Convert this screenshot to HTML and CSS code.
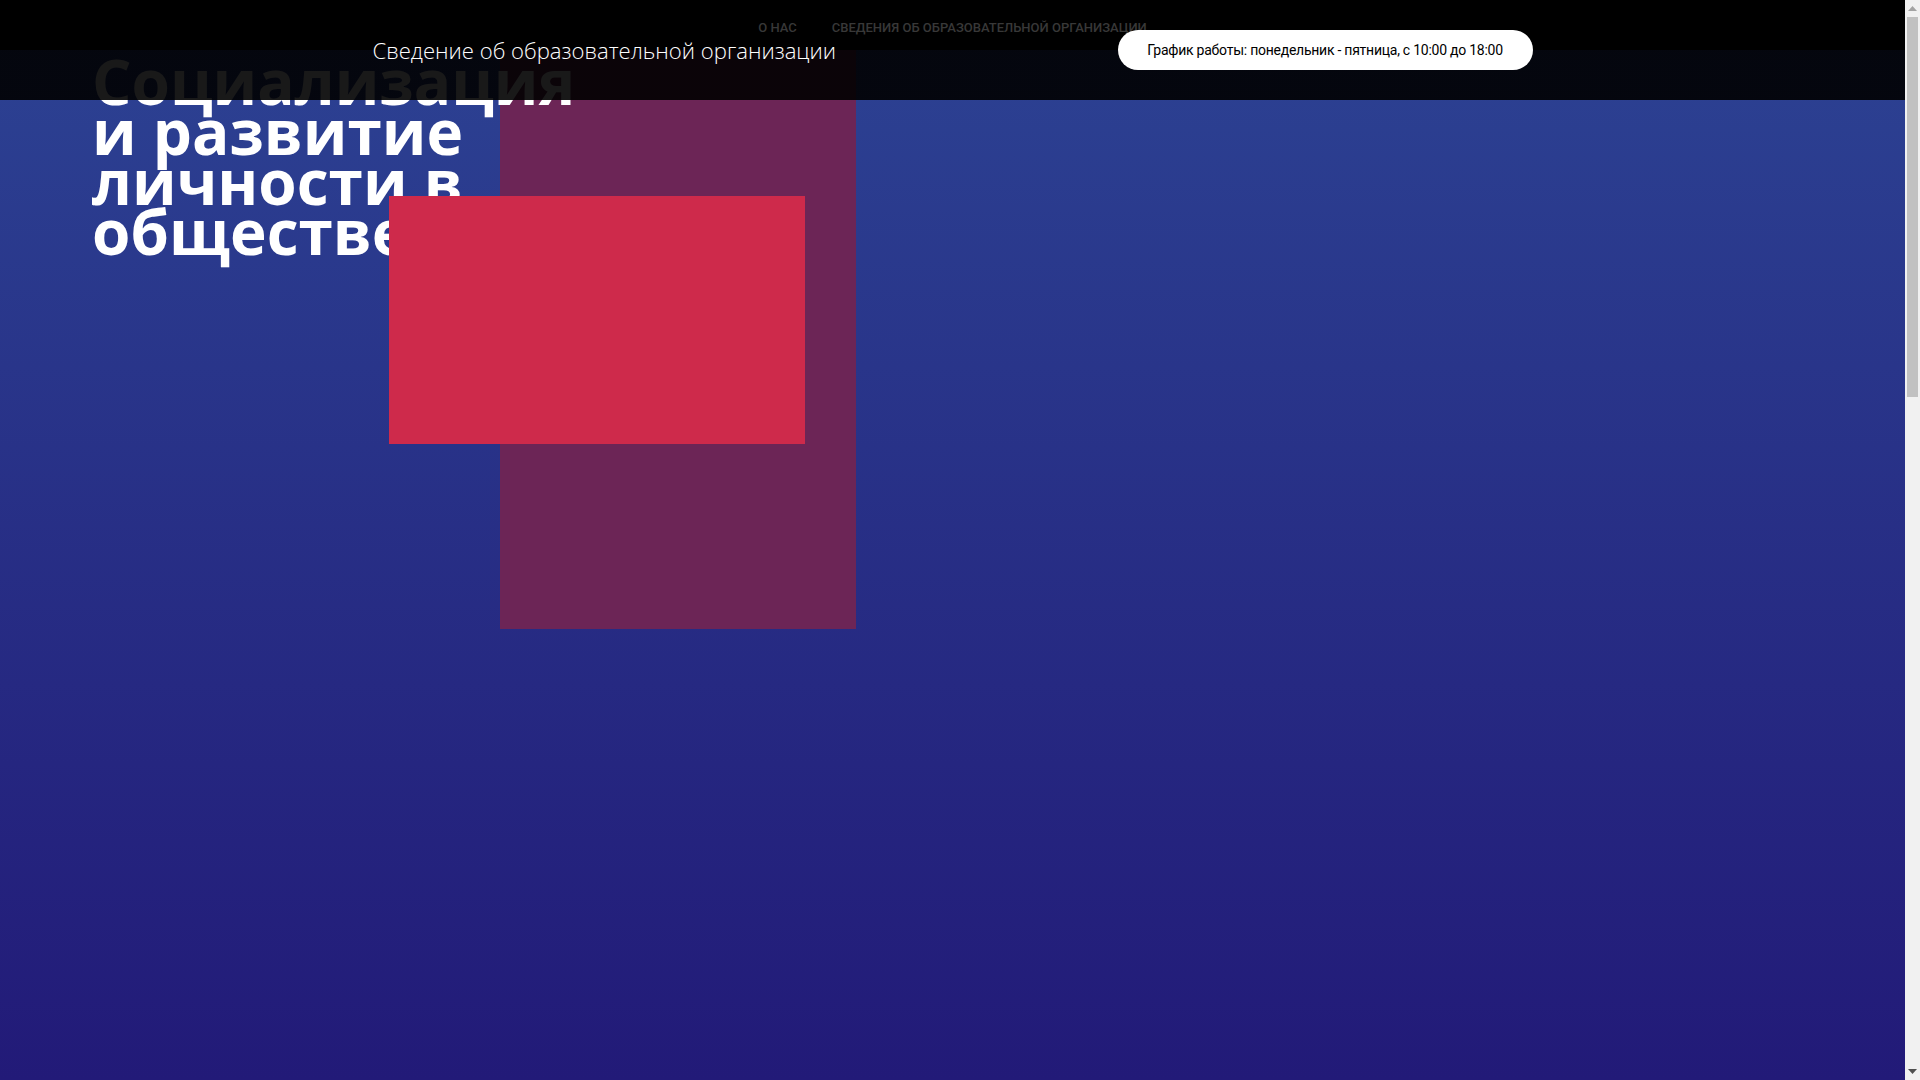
FILE: index.html
```html
<!DOCTYPE html>
<html lang="ru">
<head>
<meta charset="utf-8">
<title>Социализация и развитие личности в обществе</title>
<link rel="stylesheet" href="styles.css">
</head>
<body>
<div class="page">
  <header class="site-header">
    <nav class="main-nav">
      <a class="nav-link" href="#">О НАС</a>
      <a class="nav-link" href="#">СВЕДЕНИЯ ОБ ОБРАЗОВАТЕЛЬНОЙ ОРГАНИЗАЦИИ</a>
    </nav>
    <div class="header-row">
      <a class="brand" href="#">Сведение об образовательной организации</a>
      <div class="schedule">График работы: понедельник - пятница, с 10:00 до 18:00</div>
    </div>
  </header>
  <main>
    <section class="hero">
      <div class="shape shape-purple"></div>
      <h1 class="hero-title">Социализация<br>и развитие<br>личности в<br>обществе</h1>
      <div class="shape shape-red"></div>
    </section>
  </main>
</div>
<div class="scroll-rail" aria-hidden="true">
  <div class="rail-btn">
    <svg width="9" height="5" viewBox="0 0 9 5"><path d="M0 5 L4.5 0 L9 5 Z" fill="#a3a3a3"/></svg>
  </div>
  <div class="rail-track">
    <div class="rail-thumb"></div>
  </div>
  <div class="rail-btn">
    <svg width="9" height="5" viewBox="0 0 9 5"><path d="M0 0 L9 0 L4.5 5 Z" fill="#505050"/></svg>
  </div>
</div>
</body>
</html>
```

FILE: styles.css
```css
html, body {
  margin: 0;
  padding: 0;
  height: 100%;
  overflow: hidden;
}
body {
  background: #000;
  font-family: "Open Sans", "Noto Sans", sans-serif;
  display: flex;
}
.page {
  position: relative;
  flex: 1;
  min-width: 0;
  height: 100vh;
  overflow: hidden;
}
.scroll-rail {
  width: 15px;
  height: 100vh;
  background: #f1f1f1;
  display: flex;
  flex-direction: column;
}
.rail-btn {
  height: 17px;
  display: flex;
  align-items: center;
  justify-content: center;
}
.rail-track {
  flex: 1;
  padding: 0 2px;
}
.rail-thumb {
  height: 380px;
  background: #c1c1c1;
}
.site-header {
  position: absolute;
  top: 0;
  left: 0;
  right: 0;
  height: 100px;
  z-index: 10;
  display: grid;
  background: linear-gradient(to bottom, #000 0, #000 50px, rgba(0,0,0,0.9) 50px, rgba(0,0,0,0.9) 100px);
}
.main-nav {
  grid-area: 1 / 1;
  justify-self: center;
  align-self: start;
  padding-top: 20px;
  display: flex;
  gap: 35px;
}
.nav-link {
  font-family: Roboto, "Noto Sans", sans-serif;
  font-weight: 500;
  font-size: 13px;
  line-height: 16px;
  color: #383838;
  text-decoration: none;
}
.header-row {
  grid-area: 1 / 1;
  width: 1160px;
  justify-self: center;
  align-self: center;
  display: flex;
  align-items: center;
  justify-content: space-between;
}
.brand {
  font-family: "Open Sans", "Noto Sans", sans-serif;
  font-weight: 300;
  font-size: 22.1px;
  line-height: 28px;
  color: #fff;
  text-decoration: none;
}
.schedule {
  width: 415px;
  height: 40px;
  box-sizing: border-box;
  border-radius: 20px;
  background: #fff;
  color: #000;
  font-family: Roboto, "Noto Sans", sans-serif;
  font-size: 14px;
  letter-spacing: -0.25px;
  display: flex;
  align-items: center;
  justify-content: center;
}
.hero {
  position: relative;
  margin-top: 50px;
  height: 1030px;
  box-sizing: border-box;
  padding-left: 92px;
  padding-top: 6px;
  background: linear-gradient(to bottom, #2c4192 0%, #221a78 100%);
  overflow: hidden;
}
.hero-title {
  position: relative;
  z-index: 1;
  margin: 0;
  font-family: "Open Sans", "Noto Sans", sans-serif;
  font-weight: 700;
  font-size: 62px;
  line-height: 50px;
  color: #fff;
}
.shape {
  position: absolute;
}
.shape-purple {
  left: 500px;
  top: 0;
  width: 356px;
  height: 579px;
  background: #6c2556;
  z-index: 0;
}
.shape-red {
  left: 389px;
  top: 146px;
  width: 416px;
  height: 248px;
  background: #ce2a4b;
  z-index: 2;
}
```
